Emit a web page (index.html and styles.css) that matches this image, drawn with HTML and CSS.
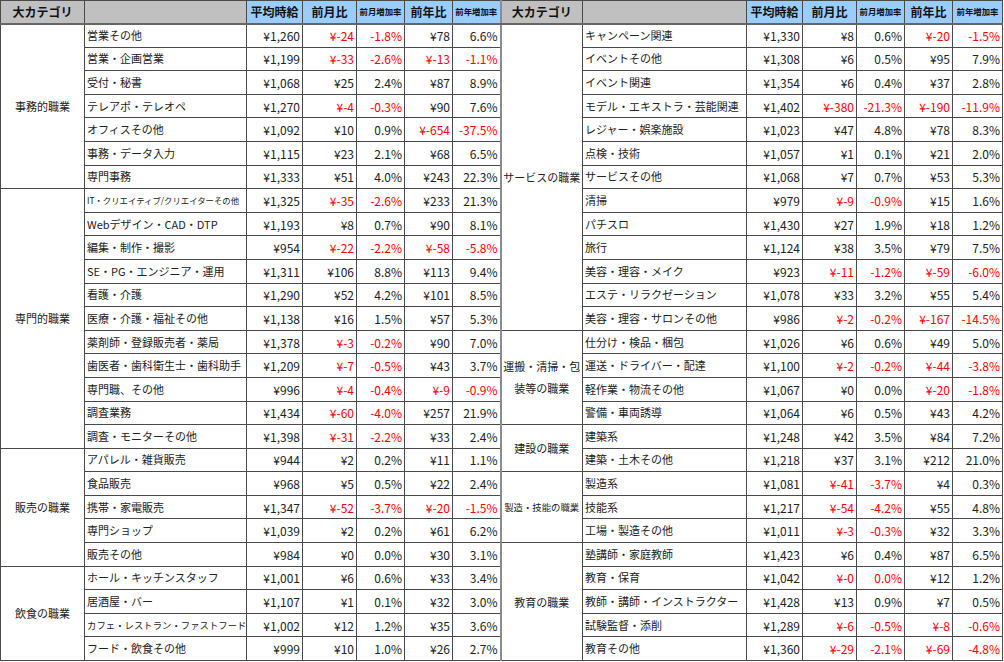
FILE: index.html
```html
<!DOCTYPE html>
<html lang="ja">
<head>
<meta charset="utf-8">
<title>職種別平均時給</title>
<link rel="stylesheet" href="styles.css">
</head>
<body>
<table class="wage">
<colgroup>
<col class="c-cat"><col class="c-sub"><col class="c-avg"><col class="c-m"><col class="c-mr"><col class="c-y"><col class="c-yr">
<col class="c-cat2"><col class="c-sub2"><col class="c-avg"><col class="c-m"><col class="c-mr"><col class="c-y"><col class="c-yr2">
</colgroup>
<thead>
<tr class="head">
<th class="hg">大カテゴリ</th><th class="hg"></th><th class="hb">平均時給</th><th class="hb">前月比</th><th class="hb hs">前月増加率</th><th class="hb">前年比</th><th class="hb hs mid">前年増加率</th>
<th class="hg">大カテゴリ</th><th class="hg"></th><th class="hb">平均時給</th><th class="hb">前月比</th><th class="hb hs">前月増加率</th><th class="hb">前年比</th><th class="hb hs">前年増加率</th>
</tr>
</thead>
<tbody>
<tr><td class="cat" rowspan="7">事務的職業</td><td class="sub">営業その他</td><td class="num">¥1,260</td><td class="num r">¥-24</td><td class="num r">-1.8%</td><td class="num">¥78</td><td class="num mid">6.6%</td>
<td class="cat" rowspan="13">サービスの職業</td><td class="sub">キャンペーン関連</td><td class="num">¥1,330</td><td class="num">¥8</td><td class="num">0.6%</td><td class="num r">¥-20</td><td class="num r">-1.5%</td></tr>
<tr><td class="sub">営業・企画営業</td><td class="num">¥1,199</td><td class="num r">¥-33</td><td class="num r">-2.6%</td><td class="num r">¥-13</td><td class="num r mid">-1.1%</td>
<td class="sub">イベントその他</td><td class="num">¥1,308</td><td class="num">¥6</td><td class="num">0.5%</td><td class="num">¥95</td><td class="num">7.9%</td></tr>
<tr><td class="sub">受付・秘書</td><td class="num">¥1,068</td><td class="num">¥25</td><td class="num">2.4%</td><td class="num">¥87</td><td class="num mid">8.9%</td>
<td class="sub">イベント関連</td><td class="num">¥1,354</td><td class="num">¥6</td><td class="num">0.4%</td><td class="num">¥37</td><td class="num">2.8%</td></tr>
<tr><td class="sub">テレアポ・テレオペ</td><td class="num">¥1,270</td><td class="num r">¥-4</td><td class="num r">-0.3%</td><td class="num">¥90</td><td class="num mid">7.6%</td>
<td class="sub">モデル・エキストラ・芸能関連</td><td class="num">¥1,402</td><td class="num r">¥-380</td><td class="num r">-21.3%</td><td class="num r">¥-190</td><td class="num r">-11.9%</td></tr>
<tr><td class="sub">オフィスその他</td><td class="num">¥1,092</td><td class="num">¥10</td><td class="num">0.9%</td><td class="num r">¥-654</td><td class="num r mid">-37.5%</td>
<td class="sub">レジャー・娯楽施設</td><td class="num">¥1,023</td><td class="num">¥47</td><td class="num">4.8%</td><td class="num">¥78</td><td class="num">8.3%</td></tr>
<tr><td class="sub">事務・データ入力</td><td class="num">¥1,115</td><td class="num">¥23</td><td class="num">2.1%</td><td class="num">¥68</td><td class="num mid">6.5%</td>
<td class="sub">点検・技術</td><td class="num">¥1,057</td><td class="num">¥1</td><td class="num">0.1%</td><td class="num">¥21</td><td class="num">2.0%</td></tr>
<tr><td class="sub">専門事務</td><td class="num">¥1,333</td><td class="num">¥51</td><td class="num">4.0%</td><td class="num">¥243</td><td class="num mid">22.3%</td>
<td class="sub">サービスその他</td><td class="num">¥1,068</td><td class="num">¥7</td><td class="num">0.7%</td><td class="num">¥53</td><td class="num">5.3%</td></tr>
<tr><td class="cat" rowspan="11">専門的職業</td><td class="sub xs">IT・クリエイティブ/クリエイターその他</td><td class="num">¥1,325</td><td class="num r">¥-35</td><td class="num r">-2.6%</td><td class="num">¥233</td><td class="num mid">21.3%</td>
<td class="sub">清掃</td><td class="num">¥979</td><td class="num r">¥-9</td><td class="num r">-0.9%</td><td class="num">¥15</td><td class="num">1.6%</td></tr>
<tr><td class="sub">Webデザイン・CAD・DTP</td><td class="num">¥1,193</td><td class="num">¥8</td><td class="num">0.7%</td><td class="num">¥90</td><td class="num mid">8.1%</td>
<td class="sub">パチスロ</td><td class="num">¥1,430</td><td class="num">¥27</td><td class="num">1.9%</td><td class="num">¥18</td><td class="num">1.2%</td></tr>
<tr><td class="sub">編集・制作・撮影</td><td class="num">¥954</td><td class="num r">¥-22</td><td class="num r">-2.2%</td><td class="num r">¥-58</td><td class="num r mid">-5.8%</td>
<td class="sub">旅行</td><td class="num">¥1,124</td><td class="num">¥38</td><td class="num">3.5%</td><td class="num">¥79</td><td class="num">7.5%</td></tr>
<tr><td class="sub">SE・PG・エンジニア・運用</td><td class="num">¥1,311</td><td class="num">¥106</td><td class="num">8.8%</td><td class="num">¥113</td><td class="num mid">9.4%</td>
<td class="sub">美容・理容・メイク</td><td class="num">¥923</td><td class="num r">¥-11</td><td class="num r">-1.2%</td><td class="num r">¥-59</td><td class="num r">-6.0%</td></tr>
<tr><td class="sub">看護・介護</td><td class="num">¥1,290</td><td class="num">¥52</td><td class="num">4.2%</td><td class="num">¥101</td><td class="num mid">8.5%</td>
<td class="sub">エステ・リラクゼーション</td><td class="num">¥1,078</td><td class="num">¥33</td><td class="num">3.2%</td><td class="num">¥55</td><td class="num">5.4%</td></tr>
<tr><td class="sub">医療・介護・福祉その他</td><td class="num">¥1,138</td><td class="num">¥16</td><td class="num">1.5%</td><td class="num">¥57</td><td class="num mid">5.3%</td>
<td class="sub">美容・理容・サロンその他</td><td class="num">¥986</td><td class="num r">¥-2</td><td class="num r">-0.2%</td><td class="num r">¥-167</td><td class="num r">-14.5%</td></tr>
<tr><td class="sub">薬剤師・登録販売者・薬局</td><td class="num">¥1,378</td><td class="num r">¥-3</td><td class="num r">-0.2%</td><td class="num">¥90</td><td class="num mid">7.0%</td>
<td class="cat" rowspan="4">運搬・清掃・包装等の職業</td><td class="sub">仕分け・検品・梱包</td><td class="num">¥1,026</td><td class="num">¥6</td><td class="num">0.6%</td><td class="num">¥49</td><td class="num">5.0%</td></tr>
<tr><td class="sub">歯医者・歯科衛生士・歯科助手</td><td class="num">¥1,209</td><td class="num r">¥-7</td><td class="num r">-0.5%</td><td class="num">¥43</td><td class="num mid">3.7%</td>
<td class="sub">運送・ドライバー・配達</td><td class="num">¥1,100</td><td class="num r">¥-2</td><td class="num r">-0.2%</td><td class="num r">¥-44</td><td class="num r">-3.8%</td></tr>
<tr><td class="sub">専門職、その他</td><td class="num">¥996</td><td class="num r">¥-4</td><td class="num r">-0.4%</td><td class="num r">¥-9</td><td class="num r mid">-0.9%</td>
<td class="sub">軽作業・物流その他</td><td class="num">¥1,067</td><td class="num">¥0</td><td class="num">0.0%</td><td class="num r">¥-20</td><td class="num r">-1.8%</td></tr>
<tr><td class="sub">調査業務</td><td class="num">¥1,434</td><td class="num r">¥-60</td><td class="num r">-4.0%</td><td class="num">¥257</td><td class="num mid">21.9%</td>
<td class="sub">警備・車両誘導</td><td class="num">¥1,064</td><td class="num">¥6</td><td class="num">0.5%</td><td class="num">¥43</td><td class="num">4.2%</td></tr>
<tr><td class="sub">調査・モニターその他</td><td class="num">¥1,398</td><td class="num r">¥-31</td><td class="num r">-2.2%</td><td class="num">¥33</td><td class="num mid">2.4%</td>
<td class="cat" rowspan="2">建設の職業</td><td class="sub">建築系</td><td class="num">¥1,248</td><td class="num">¥42</td><td class="num">3.5%</td><td class="num">¥84</td><td class="num">7.2%</td></tr>
<tr><td class="cat" rowspan="5">販売の職業</td><td class="sub">アパレル・雑貨販売</td><td class="num">¥944</td><td class="num">¥2</td><td class="num">0.2%</td><td class="num">¥11</td><td class="num mid">1.1%</td>
<td class="sub">建築・土木その他</td><td class="num">¥1,218</td><td class="num">¥37</td><td class="num">3.1%</td><td class="num">¥212</td><td class="num">21.0%</td></tr>
<tr><td class="sub">食品販売</td><td class="num">¥968</td><td class="num">¥5</td><td class="num">0.5%</td><td class="num">¥22</td><td class="num mid">2.4%</td>
<td class="cat xs2" rowspan="3">製造・技能の職業</td><td class="sub">製造系</td><td class="num">¥1,081</td><td class="num r">¥-41</td><td class="num r">-3.7%</td><td class="num">¥4</td><td class="num">0.3%</td></tr>
<tr><td class="sub">携帯・家電販売</td><td class="num">¥1,347</td><td class="num r">¥-52</td><td class="num r">-3.7%</td><td class="num r">¥-20</td><td class="num r mid">-1.5%</td>
<td class="sub">技能系</td><td class="num">¥1,217</td><td class="num r">¥-54</td><td class="num r">-4.2%</td><td class="num">¥55</td><td class="num">4.8%</td></tr>
<tr><td class="sub">専門ショップ</td><td class="num">¥1,039</td><td class="num">¥2</td><td class="num">0.2%</td><td class="num">¥61</td><td class="num mid">6.2%</td>
<td class="sub">工場・製造その他</td><td class="num">¥1,011</td><td class="num r">¥-3</td><td class="num r">-0.3%</td><td class="num">¥32</td><td class="num">3.3%</td></tr>
<tr><td class="sub">販売その他</td><td class="num">¥984</td><td class="num">¥0</td><td class="num">0.0%</td><td class="num">¥30</td><td class="num mid">3.1%</td>
<td class="cat" rowspan="5">教育の職業</td><td class="sub">塾講師・家庭教師</td><td class="num">¥1,423</td><td class="num">¥6</td><td class="num">0.4%</td><td class="num">¥87</td><td class="num">6.5%</td></tr>
<tr><td class="cat" rowspan="4">飲食の職業</td><td class="sub">ホール・キッチンスタッフ</td><td class="num">¥1,001</td><td class="num">¥6</td><td class="num">0.6%</td><td class="num">¥33</td><td class="num mid">3.4%</td>
<td class="sub">教育・保育</td><td class="num">¥1,042</td><td class="num r">¥-0</td><td class="num r">0.0%</td><td class="num">¥12</td><td class="num">1.2%</td></tr>
<tr><td class="sub">居酒屋・バー</td><td class="num">¥1,107</td><td class="num">¥1</td><td class="num">0.1%</td><td class="num">¥32</td><td class="num mid">3.0%</td>
<td class="sub">教師・講師・インストラクター</td><td class="num">¥1,428</td><td class="num">¥13</td><td class="num">0.9%</td><td class="num">¥7</td><td class="num">0.5%</td></tr>
<tr><td class="sub xs2">カフェ・レストラン・ファストフード</td><td class="num">¥1,002</td><td class="num">¥12</td><td class="num">1.2%</td><td class="num">¥35</td><td class="num mid">3.6%</td>
<td class="sub">試験監督・添削</td><td class="num">¥1,289</td><td class="num r">¥-6</td><td class="num r">-0.5%</td><td class="num r">¥-8</td><td class="num r">-0.6%</td></tr>
<tr><td class="sub">フード・飲食その他</td><td class="num">¥999</td><td class="num">¥10</td><td class="num">1.0%</td><td class="num">¥26</td><td class="num mid">2.7%</td>
<td class="sub">教育その他</td><td class="num">¥1,360</td><td class="num r">¥-29</td><td class="num r">-2.1%</td><td class="num r">¥-69</td><td class="num r">-4.8%</td></tr>
</tbody>
</table>
</body>
</html>
```
FILE: styles.css
```css
html, body {
  margin: 0;
  padding: 0;
  background: #ffffff;
}
body {
  font-family: "Noto Sans CJK JP", "Noto Sans", sans-serif;
  font-size: 11px;
  color: #222;
}
.wage {
  border-collapse: collapse;
  table-layout: fixed;
  width: 1002px;
  border: 1px solid #333;
}
.c-cat { width: 84px; }
.c-sub { width: 162px; }
.c-avg { width: 56px; }
.c-m { width: 54px; }
.c-mr { width: 48px; }
.c-y { width: 48px; }
.c-yr { width: 48px; }
.c-cat2 { width: 82px; }
.c-sub2 { width: 164px; }
.c-yr2 { width: 50px; }
.wage th, .wage td {
  border: 1px solid #4a4a4a;
  padding: 0 2px;
  white-space: nowrap;
  overflow: hidden;
  line-height: 13px;
}
.head { height: 23px; }
.wage tbody tr { height: 23.6px; }
.wage th {
  font-weight: bold;
  font-size: 12px;
  color: #111;
  text-align: center;
  border-bottom: 2px solid #666;
}
.hg { background: #c0c0c0; }
.hb { background: #99ccff; }
.wage th.hs { font-size: 8.4px; }
.wage .mid { border-right: 2px solid #8c8c8c; }
.wage td.cat {
  text-align: center;
  white-space: normal;
  word-break: break-all;
  line-height: 22px;
  padding: 0;
}
.sub { text-align: left; }
.wage td.num {
  text-align: right;
  font-size: 12px;
}
.r { color: #ff0000; }
.xs { font-size: 8.4px; }
.xs2 { font-size: 9.4px; }
.wage td.cat.xs2 { line-height: 13px; }
```
